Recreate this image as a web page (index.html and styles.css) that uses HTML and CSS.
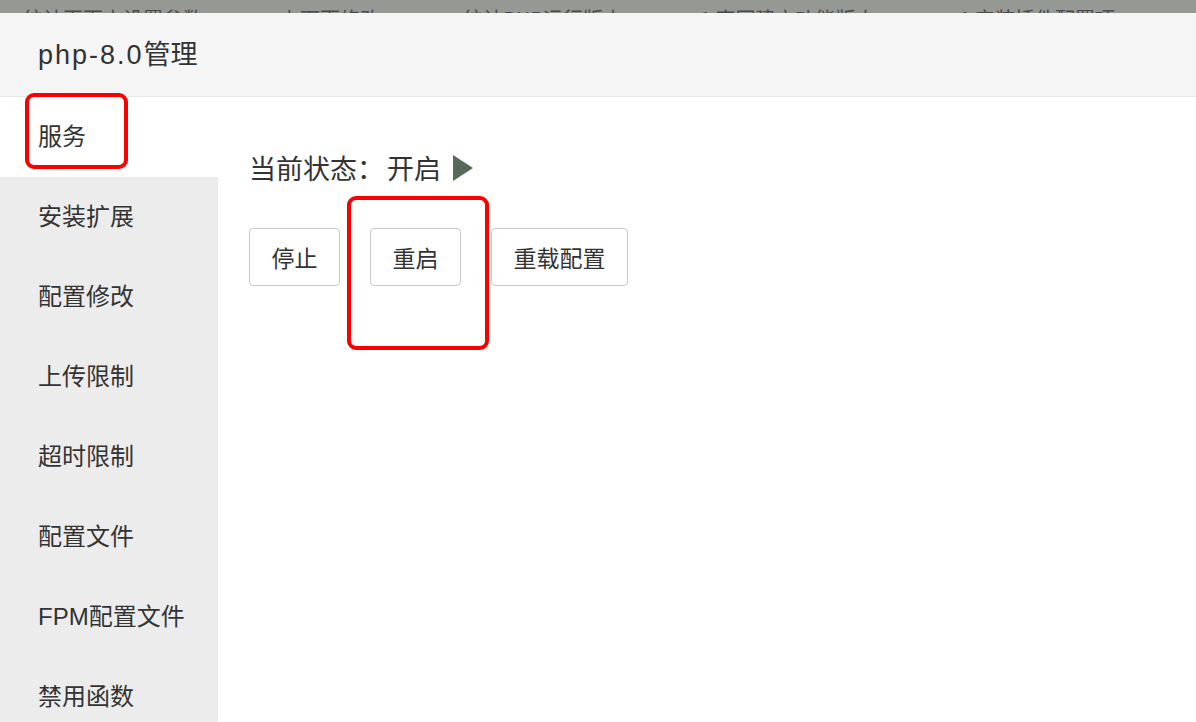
FILE: index.html
```html
<!DOCTYPE html>
<html lang="zh-CN">
<head>
    <meta charset="UTF-8">
    <meta name="viewport" content="width=device-width, initial-scale=1.0">
    <title>php-8.0管理</title>
    <link rel="stylesheet" href="styles.css">
</head>
<body>
    <div class="topstrip">
        <span class="t1">统计页面未设置参数</span>
        <span class="t2">上下面修改</span>
        <span class="t3">统计PHP运行版本</span>
        <span class="t4">1 官网建立功能版本</span>
        <span class="t5">1 安装插件配置项</span>
    </div>

    <div class="header">
        <h1><span class="latin">php-8.0</span>管理</h1>
    </div>

    <div class="main">
        <ul class="menu">
            <li class="active">服务</li>
            <li>安装扩展</li>
            <li>配置修改</li>
            <li>上传限制</li>
            <li>超时限制</li>
            <li>配置文件</li>
            <li>FPM配置文件</li>
            <li>禁用函数</li>
        </ul>

        <div class="content">
            <p class="status">当前状态：<span class="on">开启</span>
                <svg class="play" width="20" height="26" viewBox="0 0 20 26"><polygon points="0,0 20,13 0,26" fill="#576a58"/></svg>
            </p>
            <div class="buttons">
                <button>停止</button>
                <button>重启</button>
                <button>重载配置</button>
            </div>
        </div>
    </div>

    <!-- marcações vermelhas -->
    <div class="mark mark-menu"></div>
    <div class="mark mark-btn"></div>
</body>
</html>
```

FILE: styles.css
```css
body {
    font-family: "Liberation Sans", "Noto Sans CJK SC", sans-serif;
    margin: 0;
    padding: 0;
    color: #333;
    background-color: #fff;
    position: relative;
    height: 722px;
    overflow: hidden;
}

.topstrip {
    height: 13px;
    background-color: #969993;
    overflow: hidden;
    white-space: nowrap;
    font-family: "Noto Sans CJK SC", sans-serif;
    font-size: 20px;
    line-height: 20px;
    color: #4a4a4a;
    display: flex;
}

.topstrip span {
    display: block;
    margin-top: 9px;
}

.t1 { margin-left: 23px; }
.t2 { margin-left: 77px; }
.t3 { margin-left: 83px; }
.t4 { margin-left: 77px; }
.t5 { margin-left: 84px; }

.header {
    height: 83px;
    background-color: #f5f5f5;
    border-bottom: 1px solid #e6e6e6;
    display: flex;
    align-items: center;
    padding-left: 38px;
}

.header h1 {
    margin: 0;
    font-size: 27px;
    font-weight: normal;
    color: #333;
    padding-bottom: 4px;
}

.header .latin {
    letter-spacing: 2px;
}

.main {
    display: flex;
}

.menu {
    list-style: none;
    margin: 0;
    padding: 0;
    width: 218px;
    background-color: #ececec;
    height: 625px;
}

.menu li {
    height: 80px;
    line-height: 80px;
    padding-left: 38px;
    font-size: 24px;
    color: #333;
}

.menu li.active {
    background-color: #fff;
}

.content {
    padding-left: 31px;
    padding-top: 53px;
}

.status {
    margin: 0;
    font-family: "Noto Sans CJK SC", sans-serif;
    font-size: 27px;
    line-height: 36px;
    display: flex;
    align-items: center;
}

.status .on {
    margin-left: 3px;
}

.play {
    margin-left: 12px;
}

.buttons {
    display: flex;
    gap: 30px;
    margin-top: 42px;
}

.buttons button {
    font-family: "Noto Sans CJK SC", sans-serif;
    font-size: 23px;
    color: #333;
    background-color: #fff;
    border: 1px solid #c8c8c8;
    border-radius: 4px;
    height: 58px;
    padding: 0 21.5px;
    margin: 0;
}

.mark {
    position: absolute;
    border: 4px solid #fa0000;
    border-radius: 9px;
}

.mark-menu {
    left: 25px;
    top: 93px;
    width: 95px;
    height: 68px;
}

.mark-btn {
    left: 347px;
    top: 196px;
    width: 134px;
    height: 146px;
}
```
